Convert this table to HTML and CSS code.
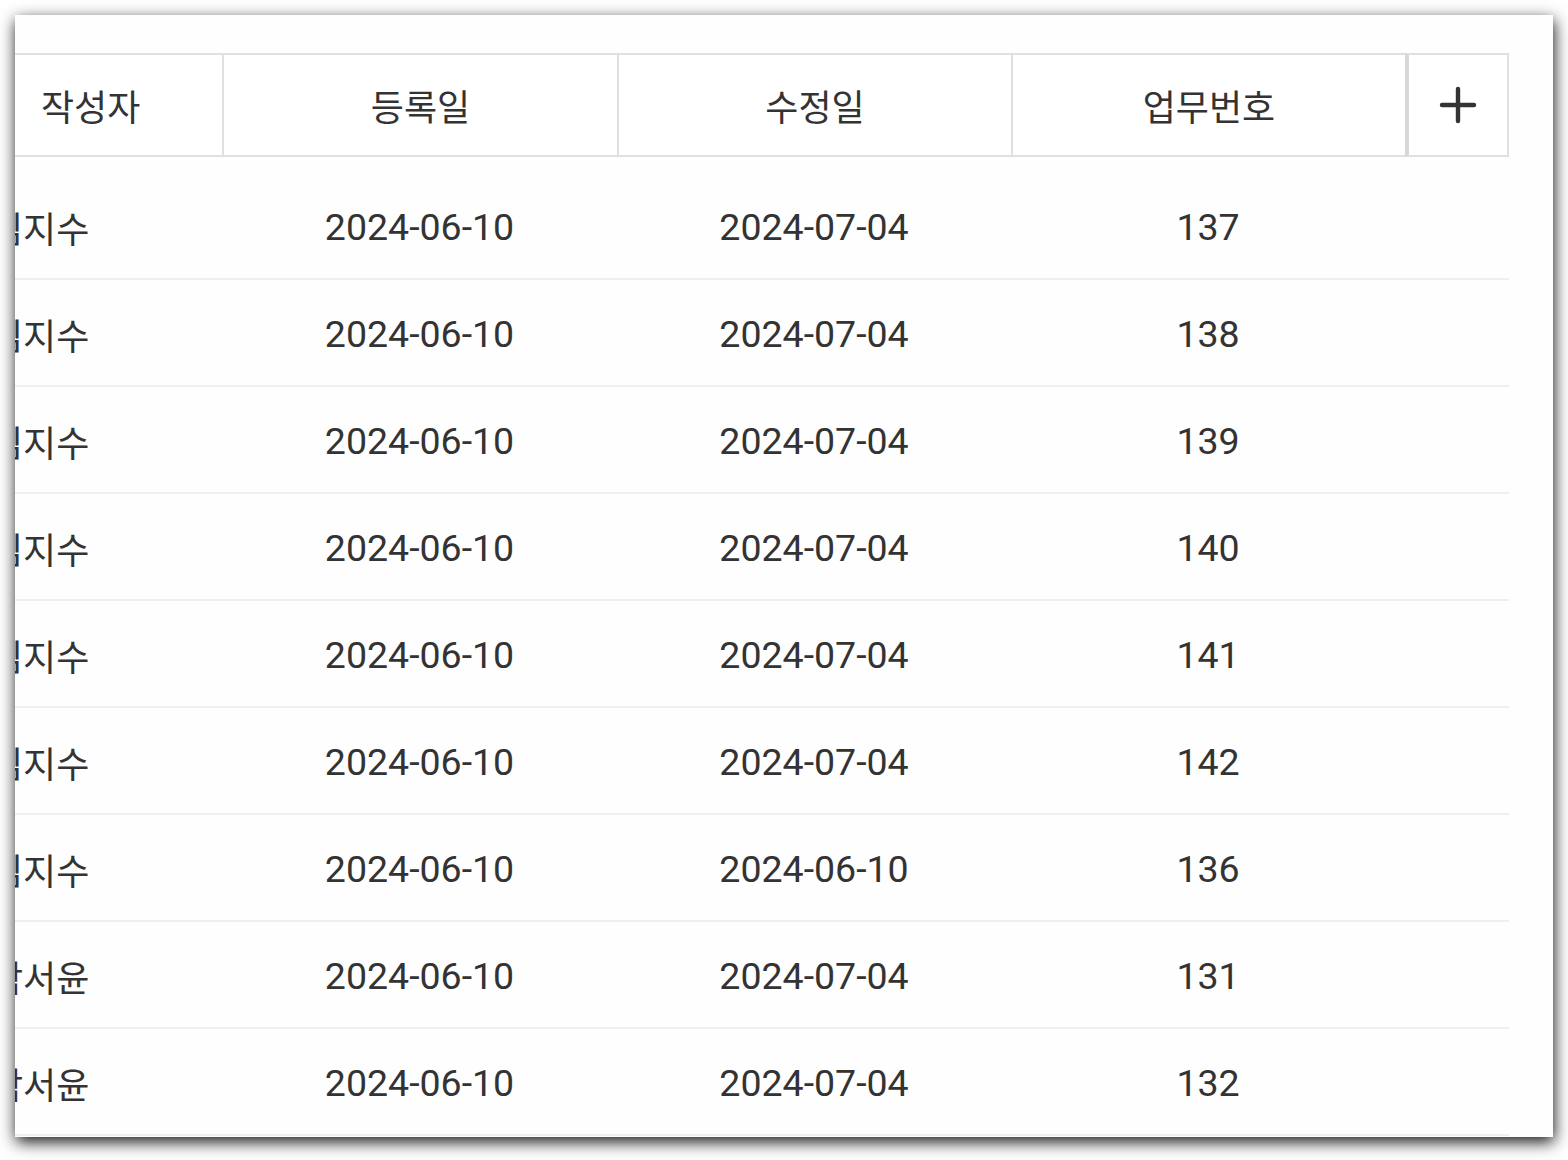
FILE: index.html
```html
<!DOCTYPE html>
<html lang="ko">
<head>
<meta charset="utf-8">
<title>업무 목록</title>
<link rel="stylesheet" href="styles.css">
</head>
<body>
<div class="panel">
  <div class="scroller">
    <div class="grid">
      <div class="head">
        <div class="hcell first">작성자</div>
        <div class="hcell">등록일</div>
        <div class="hcell">수정일</div>
        <div class="hcell">업무번호</div>
        <div class="hcell add">
          <svg width="40" height="40" viewBox="0 0 40 40" aria-hidden="true">
            <path d="M20 4V36M4 20H36" stroke="#333" stroke-width="4.4" stroke-linecap="round" fill="none"/>
          </svg>
        </div>
      </div>
      <div class="body">
        <div class="row"><div class="cell first">김지수</div><div class="cell">2024-06-10</div><div class="cell">2024-07-04</div><div class="cell">137</div><div class="cell"></div></div>
        <div class="row"><div class="cell first">김지수</div><div class="cell">2024-06-10</div><div class="cell">2024-07-04</div><div class="cell">138</div><div class="cell"></div></div>
        <div class="row"><div class="cell first">김지수</div><div class="cell">2024-06-10</div><div class="cell">2024-07-04</div><div class="cell">139</div><div class="cell"></div></div>
        <div class="row"><div class="cell first">김지수</div><div class="cell">2024-06-10</div><div class="cell">2024-07-04</div><div class="cell">140</div><div class="cell"></div></div>
        <div class="row"><div class="cell first">김지수</div><div class="cell">2024-06-10</div><div class="cell">2024-07-04</div><div class="cell">141</div><div class="cell"></div></div>
        <div class="row"><div class="cell first">김지수</div><div class="cell">2024-06-10</div><div class="cell">2024-07-04</div><div class="cell">142</div><div class="cell"></div></div>
        <div class="row"><div class="cell first">김지수</div><div class="cell">2024-06-10</div><div class="cell">2024-06-10</div><div class="cell">136</div><div class="cell"></div></div>
        <div class="row"><div class="cell first">박서윤</div><div class="cell">2024-06-10</div><div class="cell">2024-07-04</div><div class="cell">131</div><div class="cell"></div></div>
        <div class="row"><div class="cell first">박서윤</div><div class="cell">2024-06-10</div><div class="cell">2024-07-04</div><div class="cell">132</div><div class="cell"></div></div>
      </div>
    </div>
  </div>
</div>
</body>
</html>
```
FILE: styles.css
```css
* { box-sizing: border-box; }
html, body { margin: 0; padding: 0; background: #ffffff; }
body {
  font-family: Roboto, "Noto Sans CJK KR", sans-serif;
  color: #333333;
  width: 1568px;
  height: 1160px;
  overflow: hidden;
}
.panel {
  margin: 15px 0 0 15px;
  width: 1538px;
  height: 1122px;
  background: #fefefe;
  box-shadow: 1px 5px 15px rgba(0, 0, 0, 0.92);
  overflow: hidden;
}
.scroller {
  padding-top: 38px;
  overflow: hidden;
}
.grid {
  margin-left: -40px;
  width: 1534px;
}
.head, .row {
  display: grid;
  grid-template-columns: 247px 395px 394px 394px 104px;
}
.hcell {
  height: 104px;
  border-top: 2px solid #e0e0e0;
  border-bottom: 2px solid #e0e0e0;
  border-left: 2px solid #e0e0e0;
  display: flex;
  align-items: center;
  justify-content: center;
  font-size: 36px;
  background: #ffffff;
}
.hcell.first {
  border-left: none;
  justify-content: flex-start;
  padding-left: 66px;
}
.hcell.add {
  border-left: 4px solid #d8d8d8;
  border-right: 2px solid #e0e0e0;
}
.body { padding-top: 16px; }
.row {
  height: 107px;
  border-bottom: 2px solid #efefef;
}
.cell {
  display: flex;
  align-items: center;
  justify-content: center;
  font-size: 37.5px;
  white-space: nowrap;
  padding-top: 2px;
}
.cell.first {
  justify-content: flex-start;
  padding-left: 15px;
  font-size: 36px;
}
```
